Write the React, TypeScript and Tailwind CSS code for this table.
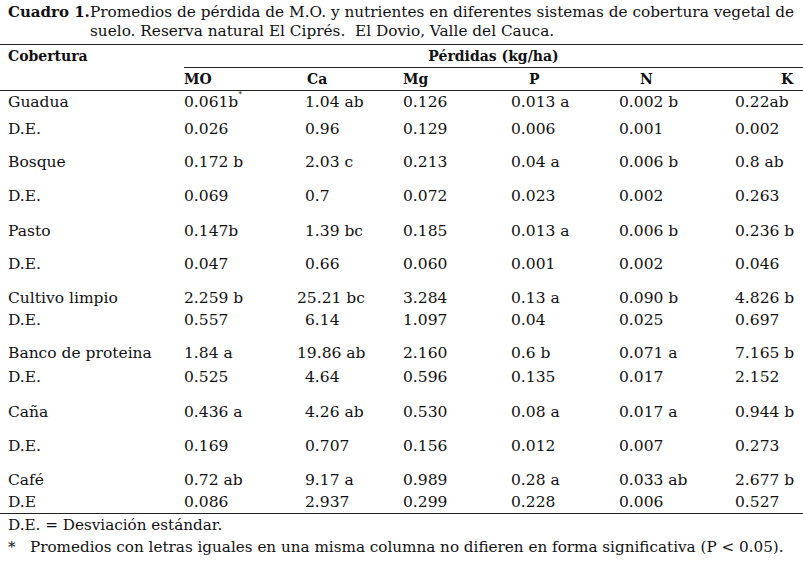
const font = { fontFamily: '"DejaVu Serif", "Liberation Serif", serif' }

const cols = "grid grid-cols-[184px_121px_98px_108px_108px_116px_1fr]"

const rows: { label: string; vals: string[]; gap: string; sup?: boolean }[] = [
  { label: "Guadua", vals: ["0.061b", "1.04 ab", "0.126", "0.013 a", "0.002 b", "0.22ab"], gap: "mt-0", sup: true },
  { label: "D.E.", vals: ["0.026", "0.96", "0.129", "0.006", "0.001", "0.002"], gap: "mt-[5px]" },
  { label: "Bosque", vals: ["0.172 b", "2.03 c", "0.213", "0.04 a", "0.006 b", "0.8 ab"], gap: "mt-[11px]" },
  { label: "D.E.", vals: ["0.069", "0.7", "0.072", "0.023", "0.002", "0.263"], gap: "mt-[12px]" },
  { label: "Pasto", vals: ["0.147b", "1.39 bc", "0.185", "0.013 a", "0.006 b", "0.236 b"], gap: "mt-[13px]" },
  { label: "D.E.", vals: ["0.047", "0.66", "0.060", "0.001", "0.002", "0.046"], gap: "mt-[11px]" },
  { label: "Cultivo limpio", vals: ["2.259 b", "25.21 bc", "3.284", "0.13 a", "0.090 b", "4.826 b"], gap: "mt-[12px]" },
  { label: "D.E.", vals: ["0.557", "6.14", "1.097", "0.04", "0.025", "0.697"], gap: "mt-0" },
  { label: "Banco de proteina", vals: ["1.84 a", "19.86 ab", "2.160", "0.6 b", "0.071 a", "7.165 b"], gap: "mt-[11px]" },
  { label: "D.E.", vals: ["0.525", "4.64", "0.596", "0.135", "0.017", "2.152"], gap: "mt-[2px]" },
  { label: "Caña", vals: ["0.436 a", "4.26 ab", "0.530", "0.08 a", "0.017 a", "0.944 b"], gap: "mt-[13px]" },
  { label: "D.E.", vals: ["0.169", "0.707", "0.156", "0.012", "0.007", "0.273"], gap: "mt-[12px]" },
  { label: "Café", vals: ["0.72 ab", "9.17 a", "0.989", "0.28 a", "0.033 ab", "2.677 b"], gap: "mt-[12px]" },
  { label: "D.E", vals: ["0.086", "2.937", "0.299", "0.228", "0.006", "0.527"], gap: "mt-0" },
]

export default function App() {
  return (
    <div className="w-[803px] h-[562px] bg-white text-[#111] text-[15.5px]" style={font}>
      {/* title */}
      <div className="pt-[3px] pl-[90px] -indent-[82px] leading-[19px] whitespace-nowrap text-[15.3px]">
        <span className="inline-block indent-0 w-[82px] font-bold text-[15px]">Cuadro 1.</span>Promedios de pérdida de M.O. y nutrientes en diferentes sistemas de cobertura vegetal de
        <br />
        suelo. Reserva natural El Ciprés.&nbsp; El Dovio, Valle del Cauca.
      </div>

      <div className="mt-[3px] border-t border-[#222]">
        {/* header */}
        <div className={cols + " font-bold leading-[22px] text-[14px]"}>
          <div className="pl-2">Cobertura</div>
          <div className="col-span-6 text-center border-b border-[#222] h-[23px]">Pérdidas (kg/ha)</div>
          <div />
          <div>MO</div>
          <div className="pl-[2px]">Ca</div>
          <div>Mg</div>
          <div className="pl-[18px]">P</div>
          <div className="pl-[21px]">N</div>
          <div className="pl-[46px]">K</div>
        </div>

        {/* body */}
        <div className="border-t border-[#222] border-b leading-[22px]">
          {rows.map((r, i) => (
            <div key={i} className={cols + " " + r.gap}>
              <div className="pl-2 whitespace-nowrap">{r.label}</div>
              {r.vals.map((v, j) => (
                <div key={j} className={"whitespace-nowrap " + (j === 1 && v.indexOf(".") === 2 ? "-ml-2" : "")}>
                  {v}
                  {r.sup && j === 0 && <sup className="text-[8px] align-super">*</sup>}
                </div>
              ))}
            </div>
          ))}
        </div>
      </div>

      {/* notes */}
      <div className="pl-2 leading-[22px] text-[15.2px]">
        <div>D.E. = Desviación estándar.</div>
        <div className="flex whitespace-nowrap">
          <span className="w-[22px]">*</span>
          <span>Promedios con letras iguales en una misma columna no difieren en forma significativa (P &lt; 0.05).</span>
        </div>
      </div>
    </div>
  )
}
